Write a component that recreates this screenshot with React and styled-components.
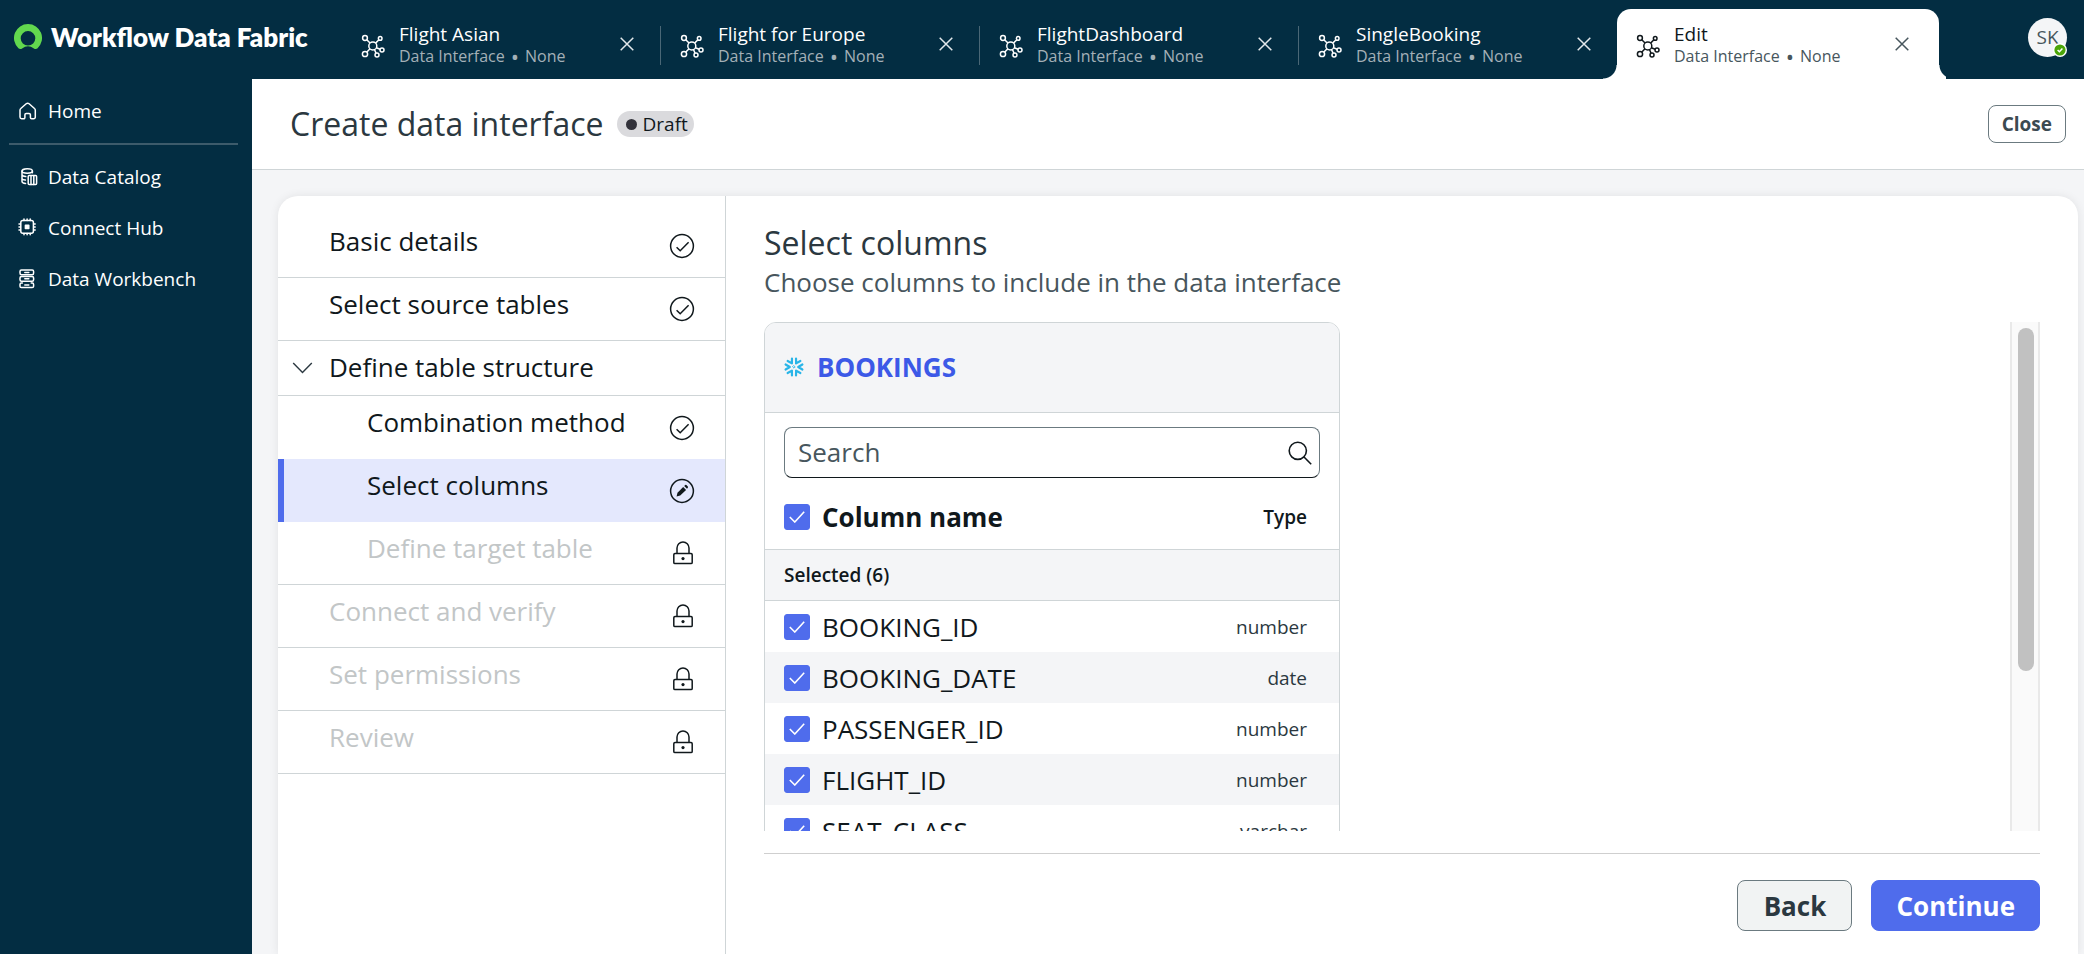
import React, { useState } from 'react';
import styled, { createGlobalStyle } from 'styled-components';

const GlobalStyle = createGlobalStyle`
  * {
    box-sizing: border-box;
  }

  body {
    margin: 0;
    font-family: 'Open Sans', 'Noto Sans', sans-serif;
    color: #10181c;
  }

  button, input {
    font-family: inherit;
  }
`;

const Page = styled.div`
  display: flex;
  flex-direction: column;
  height: 100vh;
  overflow: hidden;
  background-color: #f4f5f7;
`;

const TopBar = styled.header`
  display: flex;
  flex: none;
  height: 79px;
  background-color: #032d42;
`;

const Brand = styled.a`
  display: flex;
  align-items: center;
  gap: 9px;
  flex: none;
  width: 342px;
  padding: 0 0 6px 14px;
  color: #ffffff;
  font-family: Lato, sans-serif;
  font-size: 26px;
  font-weight: 800;
  line-height: 30px;
  text-decoration: none;
`;

const Tabs = styled.nav`
  display: flex;
  align-items: flex-end;
  flex: 1;
`;

const Tab = styled.div`
  position: relative;
  display: flex;
  align-items: center;
  width: ${props => (props.$active ? '322px' : '318px')};
  height: 70px;
  padding: 0 ${props => (props.$active ? '30px' : '26px')} 0 19px;
  border-radius: 14px 14px 0 0;
  background-color: ${props => (props.$active ? '#ffffff' : 'transparent')};
  color: ${props => (props.$active ? '#10181c' : '#ffffff')};

  &::before,
  &::after {
    content: '';
    display: ${props => (props.$active ? 'block' : 'none')};
    position: absolute;
    bottom: 0;
    height: 14px;
  }

  &::before {
    right: 100%;
    width: 14px;
    background: radial-gradient(circle at 0 0, transparent 13px, #ffffff 14px);
  }

  &::after {
    left: 100%;
    width: 7px;
    background: radial-gradient(circle at 14px 0, transparent 13px, #ffffff 14px);
  }
`;

const TabDivider = styled.span`
  width: 1px;
  height: 39px;
  margin-bottom: 14px;
  background-color: #4a6776;
`;

const TabLink = styled.a`
  display: flex;
  align-items: center;
  gap: 14px;
  flex: 1;
  padding-top: 2px;
  color: inherit;
  text-decoration: none;

  svg {
    margin-top: 2px;
  }
`;

const TabTitle = styled.div`
  font-size: 19px;
  line-height: 22px;
`;

const TabMeta = styled.div`
  display: flex;
  gap: 6px;
  font-size: 16px;
  line-height: 22px;
  color: ${props => (props.$active ? '#47565d' : '#a3b0b7')};
`;

const MetaDot = styled.span`
  font-size: 22px;
`;

const IconButton = styled.button`
  display: flex;
  padding: 0;
  border: none;
  background: none;
  color: ${props => (props.$dark ? '#47565d' : '#e3e8eb')};
  cursor: pointer;
`;

const Profile = styled.button`
  position: relative;
  flex: none;
  width: 39px;
  height: 39px;
  margin: 18px 17px 0 0;
  padding: 0;
  border: none;
  border-radius: 50%;
  background-color: #f4f5f7;
  color: #47565d;
  font-size: 19px;
  line-height: 39px;
  cursor: pointer;

  svg {
    position: absolute;
    right: 0;
    bottom: 0;
  }
`;

const Body = styled.div`
  display: flex;
  flex: 1;
  min-height: 0;
`;

const Sidebar = styled.nav`
  flex: none;
  width: 252px;
  padding-top: 6px;
  background-color: #032d42;
`;

const SideLink = styled.a`
  display: flex;
  align-items: center;
  gap: 10px;
  height: 51px;
  padding-left: 18px;
  color: #ffffff;
  font-size: 19px;
  line-height: 26px;
  text-decoration: none;
`;

const SideDivider = styled.hr`
  height: 2px;
  margin: 7px 14px 6px 9px;
  border: none;
  background-color: #3d5b6b;
`;

const Workspace = styled.main`
  display: flex;
  flex-direction: column;
  flex: 1;
  min-width: 0;
`;

const PageHeader = styled.div`
  display: flex;
  align-items: center;
  flex: none;
  height: 91px;
  padding: 0 18px 0 38px;
  border-bottom: 1px solid #cfd5d7;
  background-color: #ffffff;
`;

const PageTitle = styled.h1`
  margin: 0;
  color: #2b3840;
  font-size: 32px;
  font-weight: 400;
  line-height: 44px;
`;

const Status = styled.span`
  display: flex;
  align-items: center;
  gap: 6px;
  height: 26px;
  margin: 0 auto 0 13px;
  padding: 0 6px 0 9px;
  border-radius: 13px;
  background-color: #dadadd;
  font-size: 19px;
  line-height: 26px;

  &::before {
    content: '';
    width: 11px;
    height: 11px;
    border-radius: 50%;
    background-color: #33333b;
  }
`;

const CloseButton = styled.button`
  height: 38px;
  padding: 0 13px;
  border: 1px solid #6b7a80;
  border-radius: 8px;
  background-color: #ffffff;
  color: #3c4a51;
  font-size: 19px;
  font-weight: 700;
  cursor: pointer;
`;

const Wizard = styled.div`
  display: flex;
  flex: 1;
  min-height: 0;
  margin: 26px 6px 0 26px;
  border-radius: 20px 20px 0 0;
  background-color: #ffffff;
  box-shadow: 0 0 10px rgba(16, 24, 28, 0.08);
  overflow: hidden;
`;

const Steps = styled.ol`
  flex: none;
  width: 448px;
  margin: 0;
  padding: 19px 0 0;
  border-right: 1px solid #cfd5d7;
  list-style: none;
`;

const StepButton = styled.button`
  display: flex;
  align-items: center;
  width: 100%;
  min-height: ${props => (props.$group ? '55px' : '63px')};
  padding: 0 30px 0 14px;
  border: none;
  border-bottom: ${props => (props.$line ? '1px solid #cfd5d7' : 'none')};
  background-color: ${props => (props.$active ? '#e4e8fd' : 'transparent')};
  box-shadow: ${props => (props.$active ? 'inset 6px 0 #4f6cec' : 'none')};
  color: ${props => (props.$locked ? '#c2c6c7' : '#10181c')};
  font-size: 26px;
  line-height: 36px;
  text-align: left;
  cursor: pointer;

  & > svg {
    flex: none;
    color: #10181c;
  }
`;

const StepMarker = styled.span`
  display: flex;
  align-items: center;
  flex: none;
  width: 37px;
  margin-right: ${props => (props.$nested ? '38px' : '0')};
`;

const StepLabel = styled.span`
  flex: 1;
  align-self: flex-start;
  padding-top: 8px;
`;

const Panel = styled.section`
  display: flex;
  flex-direction: column;
  flex: 1;
  min-width: 0;
  padding: 25px 38px 23px;
`;

const PanelTitle = styled.h2`
  margin: 0;
  color: #2b3840;
  font-size: 32px;
  font-weight: 400;
  line-height: 44px;
`;

const PanelText = styled.p`
  margin: 0 0 23px;
  color: #47565d;
  font-size: 26px;
  line-height: 34px;
`;

const ScrollArea = styled.div`
  display: flex;
  justify-content: space-between;
  flex: 1;
  min-height: 0;
  overflow: hidden;
`;

const ScrollTrack = styled.div`
  width: 30px;
  padding: 6px 4px 6px 6px;
  border: solid #e9e9e9;
  border-width: 0 2px;
  background-color: #fafafa;
`;

const ScrollThumb = styled.div`
  width: 16px;
  height: 69%;
  margin-left: auto;
  border-radius: 8px;
  background-color: #c1c1c1;
`;

const TableCard = styled.div`
  align-self: flex-start;
  width: 576px;
  border: 1px solid #cfd5d7;
  border-radius: 12px;
  overflow: hidden;
`;

const SourceHeader = styled.div`
  display: flex;
  align-items: center;
  gap: 13px;
  height: 90px;
  padding: 0 19px 2px;
  border-bottom: 1px solid #cfd5d7;
  background-color: #f4f5f7;
`;

const SourceLink = styled.a`
  color: #3c59e7;
  font-size: 26px;
  font-weight: 700;
  line-height: 36px;
  text-decoration: none;
`;

const SearchBox = styled.label`
  display: flex;
  align-items: center;
  height: 51px;
  margin: 14px 19px 0;
  padding: 0 7px 0 13px;
  border: 1px solid #6b7a80;
  border-bottom-color: #10181c;
  border-radius: 8px;
`;

const SearchInput = styled.input`
  flex: 1;
  min-width: 0;
  padding: 0 0 2px;
  border: none;
  outline: none;
  background: none;
  font-size: 26px;
  line-height: 36px;

  &::placeholder {
    color: #47565d;
  }
`;

const ColumnTable = styled.table`
  width: 100%;
  border-spacing: 0;
`;

const HeadCell = styled.th`
  height: 72px;
  padding: ${props => (props.$type ? '6px 32px 0 0' : '6px 0 0 19px')};
  border-bottom: 1px solid #cfd5d7;
  font-size: ${props => (props.$type ? '19px' : '26px')};
  font-weight: ${props => (props.$type ? 600 : 700)};
  text-align: ${props => (props.$type ? 'right' : 'left')};
`;

const GroupCell = styled.th`
  height: 51px;
  padding: 0 19px;
  border-bottom: 1px solid #cfd5d7;
  background-color: #f4f5f7;
  font-size: 19px;
  font-weight: 600;
  line-height: 26px;
  text-align: left;
`;

const ColumnRow = styled.tr`
  &:nth-child(odd) {
    background-color: #f4f5f7;
  }
`;

const NameCell = styled.td`
  height: 51px;
  padding: 0 0 0 19px;
  font-size: 26px;
`;

const TypeCell = styled.td`
  padding: 0 32px 0 0;
  color: #2b3840;
  font-size: 19px;
  line-height: 26px;
  text-align: right;
`;

const CheckLabel = styled.label`
  display: flex;
  align-items: center;
  gap: 12px;
  line-height: 36px;
  cursor: pointer;
`;

const CheckBox = styled.span`
  display: grid;
  place-items: center;

  & > * {
    grid-area: 1 / 1;
  }

  svg {
    pointer-events: none;
  }
`;

const CheckInput = styled.input`
  width: 26px;
  height: 26px;
  margin: 0;
  appearance: none;
  border: 1px solid #6b7a80;
  border-radius: 3px;
  background-color: #ffffff;
  cursor: pointer;

  &:checked {
    border-color: #4f6cec;
    background-color: #4f6cec;
  }
`;

const Actions = styled.div`
  display: flex;
  justify-content: flex-end;
  gap: 19px;
  flex: none;
  margin-top: 22px;
  padding-top: 26px;
  border-top: 1px solid #cfcfcf;
`;

const ActionButton = styled.button`
  min-width: 115px;
  height: 51px;
  padding: 0 24px;
  border: 1px solid ${props => (props.$primary ? '#4f6cec' : '#6b7a80')};
  border-radius: 8px;
  background-color: ${props => (props.$primary ? '#4f6cec' : '#f1f3f3')};
  color: ${props => (props.$primary ? '#ffffff' : '#2b3840')};
  font-size: 26px;
  font-weight: 700;
  line-height: 36px;
  cursor: pointer;
`;

function Logo() {
  return (
    <svg width="28" height="26" viewBox="0 0 28 26" fill="#62d84e" aria-hidden="true">
      <path
        fillRule="evenodd"
        d="M14 0A14 14 0 0 0 4.4 24.2c1 1 2.6 1 3.7.2a10 10 0 0 1 11.8 0c1.1.8 2.7.8 3.7-.2A14 14 0 0 0 14 0zm0 21.6a7.3 7.3 0 1 1 0-14.6 7.3 7.3 0 0 1 0 14.6z"
      />
    </svg>
  );
}

function NetworkIcon() {
  return (
    <svg width="24" height="24" viewBox="0 0 24 24" fill="none" stroke="currentColor" strokeWidth="1.5" aria-hidden="true">
      <circle cx="11.8" cy="12" r="4" />
      <circle cx="4" cy="4" r="2.4" />
      <circle cx="19.2" cy="4.4" r="1.8" />
      <circle cx="4" cy="20" r="2.6" />
      <circle cx="16" cy="21" r="2" />
      <circle cx="21" cy="16" r="2" />
      <path d="M5.8 5.8 9 9.1M14.6 9.1l3.3-3.3M9 14.8l-3.1 3.3M13.6 15.7l1.4 3.4M15.4 13.8l3.7 1.4" />
    </svg>
  );
}

function CrossIcon() {
  return (
    <svg width="14" height="14" viewBox="0 0 14 14" fill="none" stroke="currentColor" strokeWidth="1.5" aria-hidden="true">
      <path d="M.7.7l12.6 12.6M13.3.7.7 13.3" />
    </svg>
  );
}

function SideIcon({ children }) {
  return (
    <svg width="20" height="20" viewBox="0 0 20 20" fill="none" stroke="currentColor" strokeWidth="1.5" strokeLinecap="round" strokeLinejoin="round" aria-hidden="true">
      {children}
    </svg>
  );
}

const homeIcon = (
  <SideIcon>
    <path d="M2 9.2c0-.7.3-1.3.8-1.7L8.2 2.8a2.2 2.2 0 0 1 2.9 0l5.4 4.7c.5.4.8 1 .8 1.7v6.9a1.6 1.6 0 0 1-1.6 1.6h-2.1a1.2 1.2 0 0 1-1.2-1.2v-2.7a1.4 1.4 0 0 0-1.4-1.4H8.3a1.4 1.4 0 0 0-1.4 1.4v2.7a1.2 1.2 0 0 1-1.2 1.2H3.6A1.6 1.6 0 0 1 2 16.1z" />
  </SideIcon>
);

const catalogIcon = (
  <SideIcon>
    <ellipse cx="9.2" cy="4" rx="5.2" ry="2.2" />
    <path d="M4 4v10.5c0 1 1.6 1.8 3.6 2M14.4 4v1.8M4 7.6c0 1 1.6 1.9 3.8 2M4 11.2c0 1 1.4 1.7 3.4 1.9" />
    <rect x="10.2" y="8.6" width="8.4" height="9" rx="1" />
    <path d="M13 8.8v8.6M15.8 8.8v8.6" />
  </SideIcon>
);

const hubIcon = (
  <SideIcon>
    <rect x="2.8" y="2.6" width="12.6" height="12.6" rx="2" />
    <rect x="7.4" y="7.2" width="3.4" height="3.4" fill="currentColor" />
    <path d="M6 1v1.4M9.1 1v1.4M12.2 1v1.4M6 15.4v1.4M9.1 15.4v1.4M12.2 15.4v1.4M1 6h1.4M1 9h1.4M1 12h1.4M15.8 6h1.4M15.8 9h1.4M15.8 12h1.4" />
  </SideIcon>
);

const workbenchIcon = (
  <SideIcon>
    <path d="M2 4V2.5c0-.8.6-1.4 1.4-1.4h10.8c.8 0 1.4.6 1.4 1.4V4c0 1-.6 1.8-1.4 1.8H3.4C2.6 5.8 2 5 2 4zM6.8 3.4h4" />
    <rect x="2" y="7.4" width="13.6" height="4.8" rx="1.5" />
    <path d="M6.8 9.8h4" />
    <path d="M4.4 14H3.4c-.8 0-1.4.6-1.4 1.4v1.8c0 .8.6 1.4 1.4 1.4h10.8c.8 0 1.4-.6 1.4-1.4v-1.8c0-.8-.6-1.4-1.4-1.4h-1M6.8 16h4" />
  </SideIcon>
);

function StepIcon({ state }) {
  if (state === 'locked') {
    return (
      <svg width="24" height="24" viewBox="0 0 24 24" fill="none" stroke="currentColor" strokeWidth="1.5" aria-hidden="true">
        <rect x="2.8" y="12.6" width="18.4" height="10" rx="1.2" />
        <path d="M6 12.6V7a6 6 0 0 1 12 0v5.6" />
        <circle cx="12" cy="17.6" r="1.6" fill="currentColor" stroke="none" />
      </svg>
    );
  }
  return (
    <svg width="26" height="26" viewBox="0 0 26 26" fill="none" stroke="currentColor" strokeWidth="1.5" aria-hidden="true">
      <circle cx="13" cy="13" r="11.4" />
      {state === 'done' ? (
        <path d="M7.6 14.2l3.6 3.6 8.4-8.6" />
      ) : (
        <g fill="currentColor" stroke="none">
          <path d="M14.2 9l2.9 2.9-5.9 5.7-3.6 1 .9-3.8z" />
          <path d="M15.2 8l1-.9a.9.9 0 0 1 1.2 0l1.4 1.4a.9.9 0 0 1 0 1.2l-.8 1z" />
        </g>
      )}
    </svg>
  );
}

function ChevronIcon() {
  return (
    <svg width="21" height="12" viewBox="0 0 21 12" fill="none" stroke="#2b3840" strokeWidth="1.4" aria-hidden="true">
      <path d="M1.2.9l9.3 9.6L19.8.9" />
    </svg>
  );
}

function SnowflakeIcon() {
  return (
    <svg width="20" height="20" viewBox="0 0 20 20" fill="none" stroke="#29b5e8" strokeWidth="2.2" strokeLinecap="round" strokeLinejoin="round" aria-hidden="true">
      {[0, 60, 120, 180, 240, 300].map(angle => (
        <path key={angle} d="M1.6 7.5 5.8 10l-4.2 2.5" transform={`rotate(${angle} 10 10)`} />
      ))}
      <path d="M10 8.8l1.2 1.2-1.2 1.2L8.8 10z" strokeWidth="0.9" />
    </svg>
  );
}

function SearchIcon() {
  return (
    <svg width="24" height="24" viewBox="0 0 24 24" fill="none" stroke="#10181c" strokeWidth="1.6" aria-hidden="true">
      <circle cx="9.8" cy="9.8" r="8.6" />
      <path d="M16 16l7.2 7.2" />
    </svg>
  );
}

function Check(props) {
  return (
    <CheckBox>
      <CheckInput type="checkbox" {...props} />
      <svg width="16" height="12" viewBox="0 0 16 12" fill="none" stroke="#ffffff" strokeWidth="1.6" aria-hidden="true">
        <path d="M.8 6l5 5L15.2.8" />
      </svg>
    </CheckBox>
  );
}

const tabs = ['Flight Asian', 'Flight for Europe', 'FlightDashboard', 'SingleBooking', 'Edit'];

const sections = [
  { name: 'Data Catalog', icon: catalogIcon },
  { name: 'Connect Hub', icon: hubIcon },
  { name: 'Data Workbench', icon: workbenchIcon },
];

const steps = [
  { name: 'Basic details', state: 'done', line: true },
  { name: 'Select source tables', state: 'done', line: true },
  { name: 'Define table structure', group: true, line: true },
  { name: 'Combination method', state: 'done', nested: true },
  { name: 'Select columns', state: 'editing', nested: true },
  { name: 'Define target table', state: 'locked', nested: true, line: true },
  { name: 'Connect and verify', state: 'locked', line: true },
  { name: 'Set permissions', state: 'locked', line: true },
  { name: 'Review', state: 'locked', line: true },
];

const columns = [
  { name: 'BOOKING_ID', type: 'number' },
  { name: 'BOOKING_DATE', type: 'date' },
  { name: 'PASSENGER_ID', type: 'number' },
  { name: 'FLIGHT_ID', type: 'number' },
  { name: 'SEAT_CLASS', type: 'varchar' },
];

function App() {
  const [search, setSearch] = useState('');

  return (
    <Page>
      <GlobalStyle />
      <TopBar>
        <Brand href="#home">
          <Logo />
          Workflow Data Fabric
        </Brand>
        <Tabs>
          {tabs.map((tab, index) => {
            const active = index === tabs.length - 1;
            return (
              <React.Fragment key={tab}>
                <Tab $active={active}>
                  <TabLink href="#tab">
                    <NetworkIcon />
                    <div>
                      <TabTitle>{tab}</TabTitle>
                      <TabMeta $active={active}>
                        <span>Data Interface</span>
                        <MetaDot>•</MetaDot>
                        <span>None</span>
                      </TabMeta>
                    </div>
                  </TabLink>
                  <IconButton $dark={active} aria-label={`Close ${tab}`}>
                    <CrossIcon />
                  </IconButton>
                </Tab>
                {index < tabs.length - 2 && <TabDivider />}
              </React.Fragment>
            );
          })}
        </Tabs>
        <Profile>
          SK
          <svg width="14" height="14" viewBox="0 0 14 14" aria-hidden="true">
            <circle cx="7" cy="7" r="7" fill="#ffffff" />
            <circle cx="7" cy="7" r="5.6" fill="#4ba508" />
            <path d="M4.6 7l1.8 1.7 3-3.2" fill="none" stroke="#ffffff" strokeWidth="1.5" />
          </svg>
        </Profile>
      </TopBar>
      <Body>
        <Sidebar>
          <SideLink href="#home">
            {homeIcon}
            Home
          </SideLink>
          <SideDivider />
          {sections.map(section => (
            <SideLink key={section.name} href="#section">
              {section.icon}
              {section.name}
            </SideLink>
          ))}
        </Sidebar>
        <Workspace>
          <PageHeader>
            <PageTitle>Create data interface</PageTitle>
            <Status>Draft</Status>
            <CloseButton>Close</CloseButton>
          </PageHeader>
          <Wizard>
            <Steps>
              {steps.map(step => (
                <li key={step.name}>
                  <StepButton
                    $group={step.group}
                    $line={step.line}
                    $active={step.state === 'editing'}
                    $locked={step.state === 'locked'}
                    disabled={step.state === 'locked'}
                  >
                    <StepMarker $nested={step.nested}>{step.group && <ChevronIcon />}</StepMarker>
                    <StepLabel>{step.name}</StepLabel>
                    {step.state && <StepIcon state={step.state} />}
                  </StepButton>
                </li>
              ))}
            </Steps>
            <Panel>
              <PanelTitle>Select columns</PanelTitle>
              <PanelText>Choose columns to include in the data interface</PanelText>
              <ScrollArea>
                <TableCard>
                  <SourceHeader>
                    <SnowflakeIcon />
                    <SourceLink href="#bookings">BOOKINGS</SourceLink>
                  </SourceHeader>
                  <SearchBox>
                    <SearchInput
                      placeholder="Search"
                      aria-label="Search"
                      value={search}
                      onChange={event => setSearch(event.target.value)}
                    />
                    <SearchIcon />
                  </SearchBox>
                  <ColumnTable>
                    <thead>
                      <tr>
                        <HeadCell>
                          <CheckLabel>
                            <Check defaultChecked />
                            Column name
                          </CheckLabel>
                        </HeadCell>
                        <HeadCell $type>Type</HeadCell>
                      </tr>
                    </thead>
                    <tbody>
                      <tr>
                        <GroupCell colSpan={2}>Selected (6)</GroupCell>
                      </tr>
                      {columns.map(column => (
                        <ColumnRow key={column.name}>
                          <NameCell>
                            <CheckLabel>
                              <Check defaultChecked />
                              {column.name}
                            </CheckLabel>
                          </NameCell>
                          <TypeCell>{column.type}</TypeCell>
                        </ColumnRow>
                      ))}
                    </tbody>
                  </ColumnTable>
                </TableCard>
                <ScrollTrack>
                  <ScrollThumb />
                </ScrollTrack>
              </ScrollArea>
              <Actions>
                <ActionButton>Back</ActionButton>
                <ActionButton $primary>Continue</ActionButton>
              </Actions>
            </Panel>
          </Wizard>
        </Workspace>
      </Body>
    </Page>
  );
}

export default App;
